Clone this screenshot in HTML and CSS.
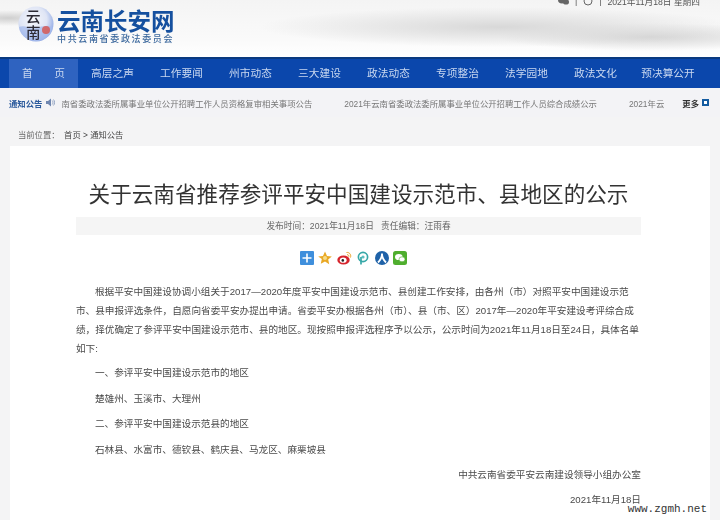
FILE: index.html
```html
<!DOCTYPE html>
<html lang="zh">
<head>
    <meta charset="utf-8">
    <title>云南长安网</title>
    <link rel="stylesheet" href="styles.css">
</head>
<body>
    <div class="page">
        <header class="top">
            <div class="brand">
                <div class="logo">
                    <svg class="logo-bg" width="36" height="36" viewBox="0 0 36 36">
                        <defs>
                            <radialGradient id="ball" cx="42%" cy="38%" r="65%">
                                <stop offset="0" stop-color="#f6f7fb"/>
                                <stop offset="0.6" stop-color="#dfe5f5"/>
                                <stop offset="1" stop-color="#8aa5e4"/>
                            </radialGradient>
                        </defs>
                        <circle cx="18" cy="18" r="17.5" fill="url(#ball)"/>
                        <path d="M1 21c6-3 11 3 17 1s11-3 17-1c-1 8-9 14-17 14S2 29 1 21z" fill="#a5bbec" opacity=".75"/>
                        <circle cx="28" cy="24" r="4" fill="#d9534a" opacity=".8"/>
                    </svg>
                    <span class="logo-text">云<br>南</span>
                </div>
                <div class="brand-text">
                    <div class="site-name">云南长安网</div>
                    <div class="site-sub">中共云南省委政法委员会</div>
                </div>
            </div>
            <div class="top-info">
                <svg width="11" height="10" viewBox="0 0 11 10"><ellipse cx="4" cy="4" rx="4" ry="3.4" fill="#666"/><ellipse cx="8" cy="6" rx="3" ry="2.6" fill="#666"/></svg>
                <span>|</span>
                <svg width="10" height="10" viewBox="0 0 10 10"><circle cx="5" cy="5" r="4" fill="none" stroke="#666"/></svg>
                <span>|</span>
                <span>2021年11月18日 星期四</span>
            </div>
        </header>

        <nav class="nav">
            <a class="nav-item active">首　　页</a>
            <a class="nav-item">高层之声</a>
            <a class="nav-item">工作要闻</a>
            <a class="nav-item">州市动态</a>
            <a class="nav-item">三大建设</a>
            <a class="nav-item">政法动态</a>
            <a class="nav-item">专项整治</a>
            <a class="nav-item">法学园地</a>
            <a class="nav-item">政法文化</a>
            <a class="nav-item last">预决算公开</a>
        </nav>

        <div class="notice">
            <b class="notice-label">通知公告</b>
            <svg class="notice-icon" width="9" height="9" viewBox="0 0 9 9"><path d="M0 3h2l3-2.500v8L2 6H0z" fill="#6f86b0"/><path d="M6.200 2.500c1 1 1 3 0 4M7.400 1.500c1.600 1.600 1.600 4.400 0 6" fill="none" stroke="#6f86b0" stroke-width=".7"/></svg>
            <div class="notice-list">
                <span>南省委政法委所属事业单位公开招聘工作人员资格复审相关事项公告</span>
                <span>2021年云南省委政法委所属事业单位公开招聘工作人员综合成绩公示</span>
                <span>2021年云南</span>
            </div>
            <b class="more">更多</b>
            <i class="more-icon"></i>
        </div>

        <div class="crumb">当前位置：&nbsp;&nbsp;<span class="crumb-links">首页 &gt; 通知公告</span></div>

        <main class="card">
            <h1 class="title">关于云南省推荐参评平安中国建设示范市、县地区的公示</h1>
            <div class="meta">发布时间：2021年11月18日&nbsp;&nbsp;&nbsp;责任编辑：汪雨春</div>
            <div class="share">
                <svg width="14" height="14" viewBox="0 0 14 14"><rect width="14" height="14" rx="1" fill="#3f8fdc"/><path d="M7 2.500v9M2.500 7h9" stroke="#fff" stroke-width="1.600"/></svg>
                <svg width="14" height="14" viewBox="0 0 14 14"><path d="M7 .5l2 4.400 4.800.5-3.600 3.200 1 4.700L7 10.400l-4.200 2.400 1-4.700L.2 5.400 5 4.900z" fill="#e9a824"/><circle cx="7" cy="7" r="2" fill="#f6dc8a"/></svg>
                <svg width="15" height="14" viewBox="0 0 15 14"><ellipse cx="6.500" cy="9" rx="6.200" ry="4.600" fill="#d6242c"/><ellipse cx="6.200" cy="9.200" rx="3.400" ry="2.600" fill="#fff"/><circle cx="5.800" cy="9.400" r="1.300" fill="#222"/><path d="M9.500 1.500c2.500-.5 5 1.800 4 5M10 3.700c1.200-.2 2.200.8 1.900 2" fill="none" stroke="#e9a020" stroke-width="1"/></svg>
                <svg width="14" height="14" viewBox="0 0 14 14"><circle cx="7" cy="6" r="4.600" fill="none" stroke="#37a8a8" stroke-width="1.700"/><circle cx="7" cy="6" r="1.600" fill="#5fc0c0"/><path d="M5 6v7.500" stroke="#37a8a8" stroke-width="1.700"/></svg>
                <svg width="14" height="14" viewBox="0 0 14 14"><circle cx="7" cy="7" r="7" fill="#1f62a8"/><path d="M7 2.500c0 4-1.500 6.500-4 9M7 2.500c0 4 1.500 6.500 4 9" fill="none" stroke="#fff" stroke-width="1.800"/></svg>
                <svg width="14" height="14" viewBox="0 0 14 14"><rect width="14" height="14" rx="2.500" fill="#4fae2e"/><ellipse cx="5.800" cy="6" rx="3.800" ry="3.100" fill="#fff"/><ellipse cx="9" cy="8.300" rx="3" ry="2.500" fill="#fff" stroke="#4fae2e" stroke-width=".6"/></svg>
            </div>
            <div class="article">
                <p class="lead">根据平安中国建设协调小组关于2017—2020年度平安中国建设示范市、县创建工作安排，由各州（市）对照平安中国建设示范市、县申报评选条件，自愿向省委平安办提出申请。省委平安办根据各州（市）、县（市、区）2017年—2020年平安建设考评综合成绩，择优确定了参评平安中国建设示范市、县的地区。现按照申报评选程序予以公示，公示时间为2021年11月18日至24日，具体名单如下:</p>
                <p>一、参评平安中国建设示范市的地区</p>
                <p>楚雄州、玉溪市、大理州</p>
                <p>二、参评平安中国建设示范县的地区</p>
                <p>石林县、水富市、德钦县、鹤庆县、马龙区、麻栗坡县</p>
                <p class="sign">中共云南省委平安云南建设领导小组办公室</p>
                <p class="sign">2021年11月18日</p>
            </div>
        </main>
    </div>
    <div class="watermark">www.zgmh.net</div>
</body>
</html>
```

FILE: styles.css
```css
:root {
    --blue: #0b47ac;
    --text: #444;
}

html, body {
    height: 100%;
}

body {
    position: relative;
    margin: 0;
    overflow: hidden;
    background: #f4f4f5;
    color: var(--text);
    font-family: "Liberation Sans", "Noto Sans CJK SC", sans-serif;
}

.page {
    height: 520px;
    overflow: hidden;
    filter: blur(0.35px);
}

/* 顶部 */
.top {
    display: flex;
    justify-content: space-between;
    height: 57px;
    overflow: hidden;
    background:
        radial-gradient(ellipse 240px 20px at 500px 27px, #d8d8d8 0%, rgba(216,216,216,0) 100%),
        radial-gradient(ellipse 150px 14px at 650px 37px, #d6d6d6 0%, rgba(214,214,214,0) 100%),
        radial-gradient(ellipse 50px 8px at 8px 18px, #cfcfcf 0%, rgba(207,207,207,0) 100%),
        linear-gradient(#f4f4f4, #fafafa 70%, #fff);
}

.brand {
    display: flex;
    gap: 3px;
    padding: 6px 0 0 18px;
}

.logo {
    position: relative;
    width: 36px;
    height: 36px;
}

.logo-text {
    position: absolute;
    top: 2px;
    left: 8px;
    font-family: "Noto Sans CJK SC", sans-serif;
    font-size: 14.5px;
    font-weight: 500;
    line-height: 16px;
    color: #2c2a34;
}

.brand-text {
    padding-top: 2px;
}

.site-name {
    font-family: "Noto Sans CJK SC", sans-serif;
    font-size: 23.5px;
    font-weight: 700;
    line-height: 24px;
    color: #15509f;
}

.site-sub {
    margin-top: 1px;
    font-family: "Noto Sans CJK SC", sans-serif;
    font-size: 9px;
    font-weight: 500;
    line-height: 12px;
    letter-spacing: 1.65px;
    color: #3e6a9e;
}

.top-info {
    display: flex;
    align-items: center;
    gap: 6px;
    height: 12px;
    margin: -5px 20px 0 0;
    font-size: 8.7px;
    color: #555;
}

/* 导航 */
.nav {
    display: flex;
    height: 29px;
    padding-left: 9px;
    border-top: 2px solid #0a3a80;
    background: var(--blue);
}

.nav-item {
    width: 69px;
    font-size: 10.7px;
    line-height: 29px;
    text-align: center;
    color: #c9d8f0;
}

.nav-item.active {
    background: #2f63c0;
}

.nav-item.last {
    width: 76px;
}

/* 通知 */
.notice {
    display: flex;
    align-items: center;
    height: 29px;
    padding: 0 11px 0 9px;
    background: #f3f3f6;
    font-size: 8.37px;
}

.notice-label {
    color: #2b5a9c;
    white-space: nowrap;
}

.notice-icon {
    flex: none;
    margin: 0 6px 0 4px;
}

.notice-list {
    display: flex;
    flex: 1;
    gap: 32px;
    overflow: hidden;
    white-space: nowrap;
    color: #777;
}

.more {
    margin-left: 18px;
    color: #333;
    white-space: nowrap;
}

.more-icon {
    flex: none;
    width: 3px;
    height: 3px;
    margin-left: 3px;
    border: 2px solid #145ba0;
    background: #fff;
}

.crumb {
    height: 29px;
    padding-left: 18px;
    font-size: 8.3px;
    line-height: 36px;
    color: #666;
}

.crumb-links {
    color: #444;
}

/* 正文 */
.card {
    box-sizing: border-box;
    height: 374px;
    margin: 0 10px;
    padding: 34px 69px 0 66px;
    background: #fff;
}

.title {
    margin: 0;
    font-size: 21.6px;
    font-weight: 400;
    line-height: 30px;
    text-align: center;
    color: #333;
}

.meta {
    margin-top: 7px;
    height: 18px;
    background: #f5f5f5;
    font-size: 8.7px;
    line-height: 18px;
    text-align: center;
    color: #666;
}

.share {
    display: flex;
    justify-content: center;
    gap: 4.5px;
    margin-top: 16px;
    padding-right: 10.5px;
}

.article {
    margin-top: 17px;
    font-size: 9.65px;
    line-height: 19px;
    color: #4a4a4a;
}

.article p {
    margin: 0 0 6.5px;
    text-indent: 19px;
}

.article .lead {
    margin-bottom: 5px;
}

.article .sign {
    margin: 5px 0 6px;
    text-align: right;
}

.watermark {
    position: absolute;
    right: 13px;
    bottom: 5px;
    font-family: "Liberation Mono", monospace;
    font-size: 11px;
    line-height: 12px;
    color: #333;
}
```
